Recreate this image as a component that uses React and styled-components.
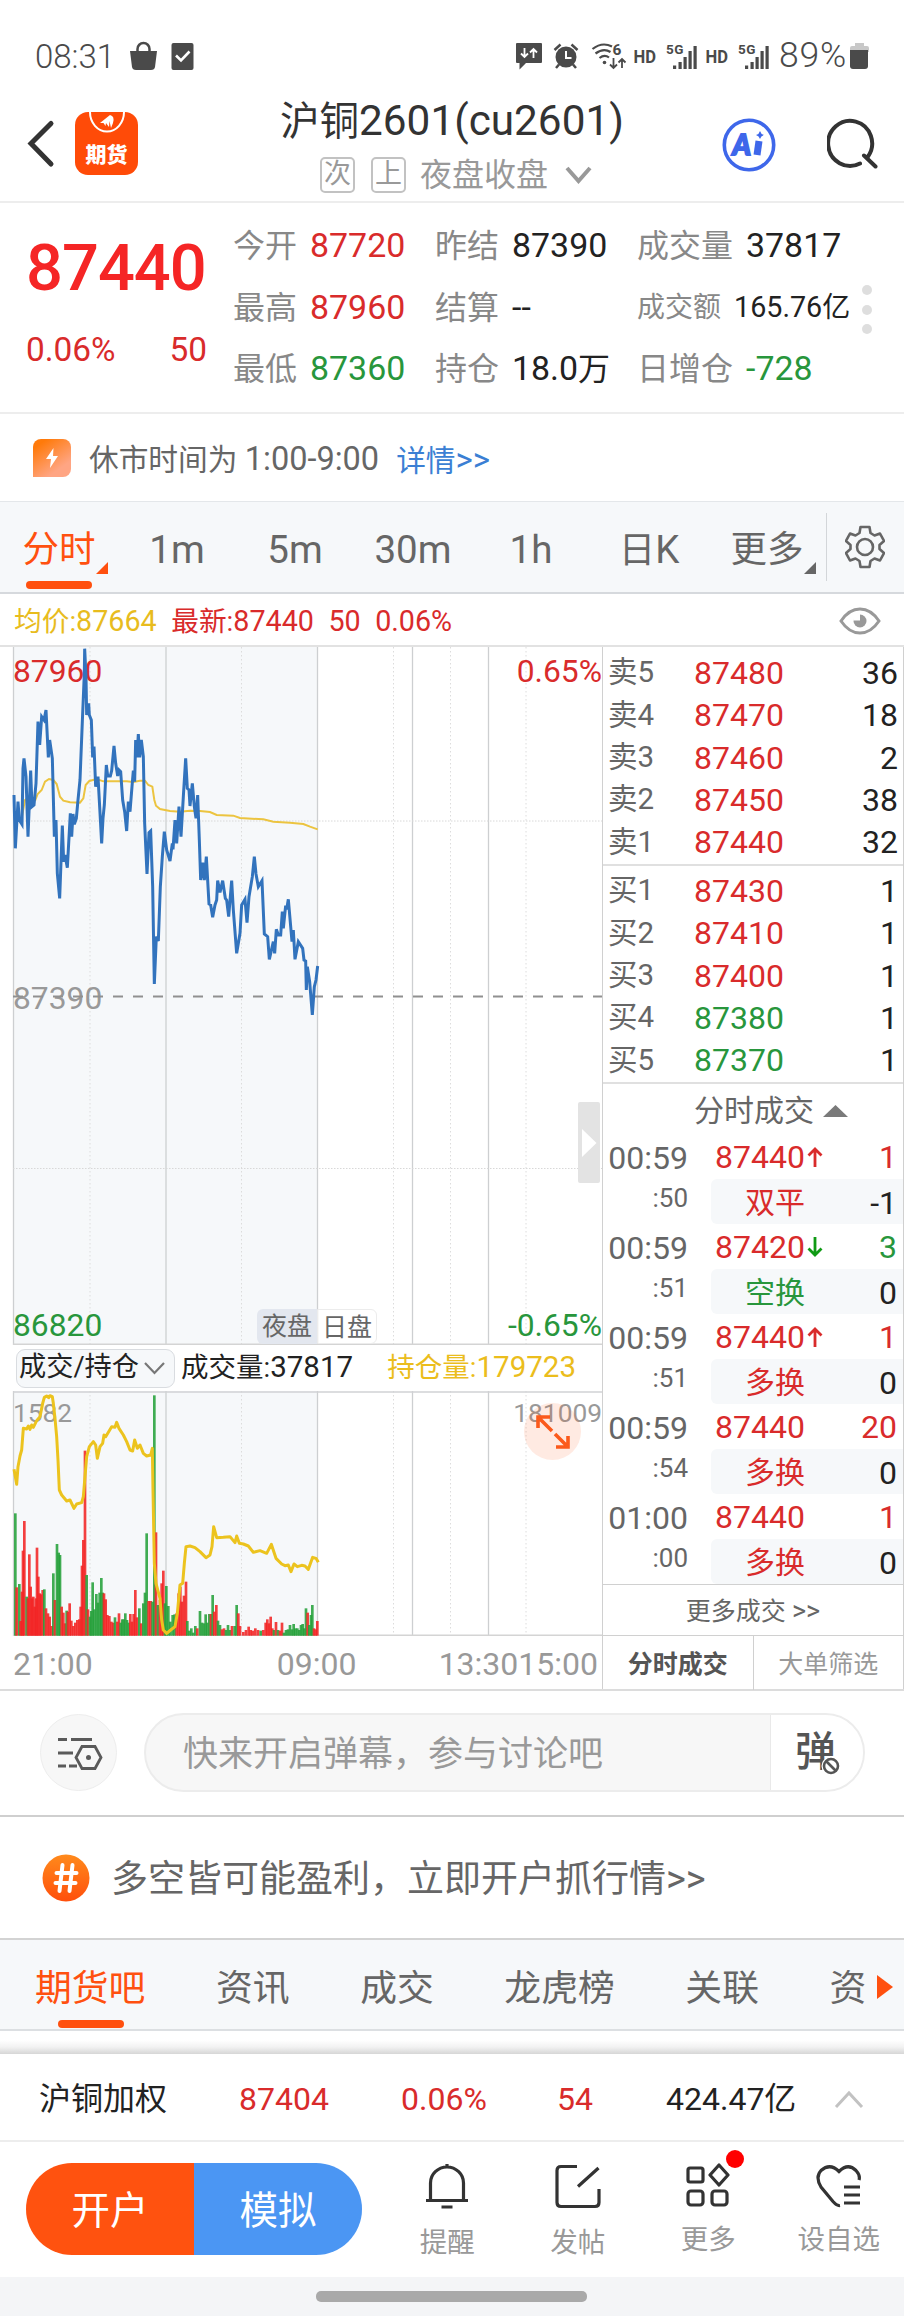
import React from 'react';

import styled, { createGlobalStyle, css } from 'styled-components';

const RED = '#d92b2b';
const GREEN = '#28963c';
const ORANGE = '#ff500f';
const LINE = '#d0d0d0';
const TINT = '#f6f8fa';

const GlobalStyle = createGlobalStyle`
  * {
    box-sizing: border-box;
  }
  body {
    margin: 0;
    background: #fff;
    font-family: Roboto, "Noto Sans CJK SC", sans-serif;
    color: #222;
  }
  svg {
    display: block;
    flex-shrink: 0;
  }
`;

const Page = styled.div`
  width: 904px;
  height: 2316px;
  overflow: hidden;
  display: flex;
  flex-direction: column;
  white-space: nowrap;
  line-height: 1;
  > * {
    flex-shrink: 0;
  }
`;

// latin glyphs run a little larger than the chinese ones
const Num = styled.span`
  font-size: ${(p) => p.$size || 32}px;
  color: ${(p) => p.$color || 'inherit'};
`;

/* status bar */

const StatusBar = styled.div`
  height: 92px;
  padding: 20px 35px 0 35px;
  display: flex;
  align-items: center;
  color: #4a4a4a;
`;

const Clock = styled.span`
  width: 94px;
  font-size: 33px;
  font-weight: 300;
`;

const StatusRight = styled.div`
  margin-left: auto;
  display: flex;
  align-items: center;
  gap: 0;
`;

const Percent = styled.span`
  font-size: 35.5px;
  font-weight: 300;
  margin: 0 3px 0 1px;
  letter-spacing: 0.8px;
`;

/* header */

const Header = styled.header`
  height: 111px;
  border-bottom: 2px solid #ededed;
  display: grid;
  grid-template-columns: 281px 342px 281px;
`;

const HeaderLeft = styled.div`
  display: flex;
  align-items: flex-start;
  padding: 20px 0 0 27px;
  gap: 20px;
`;

const Logo = styled.div`
  width: 63px;
  height: 63px;
  border-radius: 13px;
  background: #ff4b08;
  color: #fff;
  font-size: 21px;
  font-weight: 900;
  display: flex;
  flex-direction: column;
  align-items: center;
  line-height: 38px;
`;

const HeaderCenter = styled.div`
  display: flex;
  flex-direction: column;
  align-items: center;
`;

const Title = styled.h1`
  margin: 7px 0 0;
  height: 44px;
  font-size: 39.5px;
  line-height: 44px;
  font-weight: 400;
  color: #333;
`;

const SubTitle = styled.div`
  height: 36px;
  margin-top: 14px;
  padding-left: 8px;
  display: flex;
  align-items: center;
  font-size: 32px;
  color: #999;
  span {
    margin: 0 17px 0 14px;
  }
`;

const Tag = styled.i`
  width: 35px;
  height: 36px;
  border: 2px solid #c2c2c2;
  border-radius: 5px;
  margin-right: ${(p) => (p.$last ? 0 : 16)}px;
  font-style: normal;
  font-size: 27px;
  line-height: 31px;
  text-align: center;
`;

const HeaderRight = styled.div`
  display: flex;
  align-items: flex-start;
  padding: 26px 0 0 99px;
  gap: 51px;
`;

/* quote */

const Quote = styled.section`
  height: 211px;
  border-bottom: 2px solid #ededed;
  display: flex;
  padding: 12px 0 0 26px;
`;

const Last = styled.div`
  width: 207px;
  color: #f52525;
  strong {
    display: block;
    margin-top: 17px;
    height: 72px;
    line-height: 72px;
    font-size: 65px;
    font-weight: 500;
    letter-spacing: -1px;
  }
`;

const Change = styled.div`
  width: 181px;
  margin-top: 17px;
  display: flex;
  justify-content: space-between;
  font-size: 33.4px;
  line-height: 58px;
  color: ${RED};
`;

const Stats = styled.div`
  display: grid;
  grid-template-columns: 202px 202px 225px;
  grid-auto-rows: 61.7px;
`;

const Stat = styled.div`
  display: flex;
  align-items: center;
  font-size: ${(p) => (p.$small ? 28 : 32)}px;
  color: ${(p) => p.$color || '#222'};
  label {
    color: #888;
    margin-right: 13px;
  }
`;

const Dots = styled.div`
  margin-top: 70px;
  display: flex;
  flex-direction: column;
  gap: 9.5px;
  i {
    width: 10px;
    height: 10px;
    border-radius: 50%;
    background: #dedede;
  }
`;

const Notice = styled.div`
  height: 87px;
  padding: 4px 33px 0;
  display: flex;
  align-items: center;
  font-size: 29.7px;
  color: #666;
  a {
    margin-left: 17px;
    color: #3b7fd4;
  }
`;

const NoticeIcon = styled.span`
  width: 38px;
  height: 38px;
  margin: -4px 18px 0 0;
  border-radius: 8px 8px 8px 0;
  background: linear-gradient(145deg, #ff7a0a 15%, #ffa583 75%);
  display: flex;
  align-items: center;
  justify-content: center;
`;

/* period tabs */

const PeriodBar = styled.nav`
  height: 93px;
  background: ${TINT};
  border-top: 1px solid #e4e7ea;
  border-bottom: 2px solid #d6d9dd;
  display: flex;
`;

const Period = styled.div`
  position: relative;
  width: 118px;
  text-align: center;
  font-size: 36.5px;
  line-height: 95px;
  color: ${(p) => (p.$active ? ORANGE : '#666')};
  ${(p) => p.$active && css`
    &::before {
      content: '';
      position: absolute;
      left: 26px;
      bottom: 3px;
      width: 66px;
      height: 8px;
      border-radius: 4px;
      background: ${ORANGE};
    }
  `}
  ${(p) => p.$corner && css`
    &::after {
      content: '';
      position: absolute;
      right: 10px;
      top: 60px;
      border-left: 12px solid transparent;
      border-bottom: 12px solid ${p.$active ? ORANGE : '#666'};
    }
  `}
`;

const GearCell = styled.div`
  margin: 11px 0;
  padding: 0 0 0 18px;
  flex: 1;
  border-left: 1px solid #d3d6d9;
  display: flex;
  align-items: center;
`;

const InfoBar = styled.div`
  height: 51px;
  padding: 3px 23px 0 14px;
  display: flex;
  align-items: center;
  gap: 14.5px;
  font-size: 27.7px;
  color: ${RED};
  svg {
    margin-left: auto;
  }
`;

/* chart + order book */

const Main = styled.div`
  height: 1046px;
  display: flex;
  border-top: 2px solid #e2e2e2;
  border-bottom: 2px solid #dcdcdc;
`;

const ChartPane = styled.div`
  position: relative;
  width: 602px;
`;

const SessionTabs = styled.div`
  position: absolute;
  left: 257px;
  top: 662px;
  display: flex;
  span {
    width: 60px;
    height: 35px;
    font-size: 25px;
    line-height: 36px;
    text-align: center;
    color: #666;
    border: 1px solid #ececec;
    border-radius: 0 6px 6px 0;
  }
  span:first-child {
    border: none;
    border-radius: 6px 0 0 6px;
    background: #e3e7ef;
  }
`;

const Collapse = styled.div`
  position: absolute;
  right: 2px;
  top: 455px;
  width: 22px;
  height: 81px;
  border-radius: 2px;
  background: #e3e3e3;
  display: flex;
  align-items: center;
  justify-content: center;
`;

const Expand = styled.div`
  position: absolute;
  right: 21px;
  top: 756px;
  width: 57px;
  height: 57px;
  border-radius: 50%;
  background: rgba(255, 80, 15, 0.12);
  display: flex;
  align-items: center;
  justify-content: center;
`;

const VolumeBar = styled.div`
  height: 46px;
  padding-left: 16px;
  display: flex;
  align-items: center;
  font-size: 27.5px;
  color: #222;
`;

const Indicator = styled.div`
  width: 159px;
  height: 39px;
  margin-right: 6px;
  padding-left: 2px;
  border: 1px solid #d9dce0;
  border-radius: 9px;
  background: ${TINT};
  display: flex;
  align-items: center;
  gap: 4px;
  font-size: 27.2px;
`;

const OpenInterest = styled.span`
  margin-left: auto;
  margin-right: 26px;
  color: #ebbd1c;
`;

const TimeAxis = styled.div`
  height: 54px;
  padding: 2px 4px 0 13px;
  display: flex;
  align-items: center;
  font-size: 32px;
  color: #999;
  span:nth-child(2) {
    margin-left: 184px;
    margin-right: auto;
  }
`;

const BookPane = styled.div`
  width: 302px;
  border-left: 1px solid ${LINE};
  border-right: 1px solid ${LINE};
`;

const Levels = styled.div`
  height: ${(p) => p.$height}px;
  padding: ${(p) => p.$top}px 5px 0 5px;
  border-bottom: 2px solid #e0e0e0;
`;

const Level = styled.div`
  height: 42.3px;
  display: grid;
  grid-template-columns: 86px 1fr auto;
  align-items: center;
  font-size: 32px;
  span:first-child {
    font-size: 29.5px;
    color: #666;
  }
`;

const TradesTitle = styled.div`
  height: 50px;
  padding: 3px 0 0 91px;
  display: flex;
  align-items: center;
  gap: 9px;
  font-size: 30px;
  color: #666;
`;

const Trade = styled.div`
  height: 90.1px;
  display: grid;
  grid-template-columns: 108px 1fr;
  grid-template-rows: 45px 45px;
  font-size: 32px;
  line-height: 48px;
  color: #666;
`;

const TradeTime = styled.span`
  width: 85px;
  text-align: right;
`;

const Seconds = styled(TradeTime)`
  font-size: 26px;
  line-height: 38px;
`;

const TradePrice = styled.div`
  display: flex;
  align-items: center;
  padding: 0 6px 0 4px;
  color: ${RED};
  svg {
    margin-left: 2px;
  }
  span:last-child {
    margin-left: auto;
    color: ${(p) => p.$color};
  }
`;

const TradeKind = styled.div`
  display: flex;
  justify-content: space-between;
  padding: 0 6px 0 34px;
  border-radius: 6px 0 0 6px;
  background: ${TINT};
  font-size: 30px;
  color: ${(p) => p.$color};
`;

const MoreTrades = styled.div`
  height: 52px;
  border-top: 1px solid ${LINE};
  border-bottom: 1px solid ${LINE};
  text-align: center;
  font-size: 25px;
  line-height: 52px;
  color: #666;
`;

const TradeTabs = styled.div`
  display: flex;
  height: 54px;
  span {
    flex: 1;
    text-align: center;
    font-size: 25px;
    line-height: 58px;
    color: #999;
  }
  span:first-child {
    border-right: 1px solid ${LINE};
    color: #555;
    font-weight: 700;
  }
`;

/* comments and promo */

const CommentBar = styled.div`
  height: 126px;
  border-bottom: 2px solid #cfcfcf;
  padding: 0 39px 1px 40px;
  display: flex;
  align-items: center;
`;

const RoundButton = styled.div`
  width: 77px;
  height: 77px;
  margin-right: 27px;
  padding-left: 2px;
  border: 1px solid #ededed;
  border-radius: 50%;
  background: #f7f7f7;
  display: flex;
  align-items: center;
  justify-content: center;
`;

const CommentInput = styled.div`
  flex: 1;
  height: 79px;
  border: 2px solid #ececec;
  border-radius: 40px;
  background: #f7f7f7;
  overflow: hidden;
  display: flex;
  justify-content: space-between;
  padding-left: 37px;
  font-size: 35px;
  line-height: 79px;
  color: #999;
`;

const DanmuToggle = styled.div`
  position: relative;
  width: 93px;
  padding-left: 24px;
  border-left: 1px solid #e9e9e9;
  background: #fff;
  font-size: 41px;
  font-weight: 500;
  line-height: 75px;
  color: #555;
  svg {
    position: absolute;
    left: 50px;
    top: 41px;
  }
`;

const Promo = styled.div`
  height: 121px;
  padding-left: 42px;
  display: flex;
  align-items: center;
  font-size: 37px;
  color: #666;
  p {
    margin: 2px 0 0 21px;
  }
`;

const BoardTabs = styled.nav`
  height: 93px;
  background: ${TINT};
  border-top: 2px solid #d3d3d3;
  border-bottom: 2px solid #dcdfe2;
  padding-left: 35px;
  display: flex;
  gap: 70.6px;
  font-size: 36.8px;
  line-height: 98px;
  color: #666;
`;

const BoardTab = styled.span`
  position: relative;
  ${(p) => p.$active && css`
    color: ${ORANGE};
    &::after {
      content: '';
      position: absolute;
      left: 23px;
      bottom: 1px;
      width: 66px;
      height: 8px;
      border-radius: 4px;
      background: ${ORANGE};
    }
  `}
`;

const BoardArrow = styled.i`
  width: 0;
  align-self: center;
  margin-left: -60px;
  margin-top: 4px;
  border: 12px solid transparent;
  border-left: 16px solid ${ORANGE};
  border-right: none;
`;

const Shade = styled.div`
  height: 23px;
  background: linear-gradient(#fff 40%, #f2f2f2 70%, #d6d6d6);
`;

const IndexRow = styled.div`
  height: 88px;
  border-bottom: 2px solid #ededed;
  display: grid;
  grid-template-columns: 200px 162px 156px 109px 168px 28px;
  align-items: center;
  padding: 4px 0 0 39px;
  font-size: 32px;
  color: ${RED};
  span:nth-child(1),
  span:nth-child(5) {
    color: #222;
  }
`;

const Actions = styled.div`
  height: 135px;
  padding-left: 26px;
  display: flex;
`;

const Pill = styled.div`
  width: 336px;
  height: 92px;
  margin-top: 21px;
  border-radius: 46px;
  overflow: hidden;
  display: flex;
  font-size: 38.5px;
  line-height: 96px;
  color: #fff;
  text-align: center;
`;

const PillHalf = styled.span`
  flex: 1;
  background: ${(p) => p.$color};
`;

const Action = styled.div`
  position: relative;
  width: 130.5px;
  margin-left: ${(p) => (p.$first ? 20 : 0)}px;
  padding-top: 21px;
  display: flex;
  flex-direction: column;
  align-items: center;
  font-size: 27.5px;
  color: #999;
  span {
    margin-top: ${(p) => (p.$tight ? 17 : 20)}px;
  }
`;

const RedDot = styled.i`
  position: absolute;
  left: 83px;
  top: 8px;
  width: 18px;
  height: 18px;
  border-radius: 50%;
  background: #ff0000;
`;

const HomeArea = styled.div`
  height: 39px;
  padding-top: 14px;
  background: #f4f5f7;
  &::before {
    content: '';
    display: block;
    width: 271px;
    height: 11px;
    margin-left: 316px;
    border-radius: 5px;
    background: #a9a9a9;
  }
`;

// chart series, three units per pixel
const PRICE = '42,465 46,625 54,485 58,540 66,553 69,385 72,355 78,410 84,590 92,392 96,500 102,495 108,430 114,245 119,315 125,230 132,240 138,210 145,352 149,300 157,355 163,590 168,540 172,700 179,775 187,557 191,665 195,645 202,683 211,520 215,590 219,522 223,553 229,535 234,480 240,420 247,245 253,100 254,26 258,110 260,225 266,190 268,225 274,240 278,352 282,320 287,440 294,410 299,500 305,610 309,535 313,495 319,375 323,408 331,408 335,392 342,318 347,370 353,408 357,390 362,395 368,480 374,515 380,573 385,485 390,515 396,440 400,392 404,425 407,300 411,352 415,282 419,352 424,300 430,350 434,550 441,702 447,578 452,573 458,740 463,1032 469,890 475,903 481,740 487,650 493,575 500,630 510,663 517,610 519,628 525,540 530,610 537,500 543,590 550,470 557,355 562,445 567,450 570,498 577,430 583,500 588,535 593,465 598,600 602,720 608,668 613,720 619,650 627,792 632,795 638,832 645,795 650,780 653,722 660,757 668,722 676,775 680,780 686,830 695,722 700,810 710,940 720,880 725,795 735,778 741,848 747,770 757,710 763,650 768,702 775,740 786,722 793,882 803,890 808,958 820,905 824,940 829,868 835,885 842,885 847,815 850,865 857,797 860,808 865,778 876,905 880,870 885,958 895,905 908,925 912,960 917,963 919,1050 922,980 929,1025 937,1125 943,1040 948,1020 953,978';
const AVERAGE = '62,550 75,480 84,474 106,480 113,462 125,450 135,425 147,417 160,420 170,432 180,470 190,482 210,487 240,488 250,475 257,435 268,423 290,417 310,424 380,424 400,426 420,422 435,422 445,435 457,440 463,480 468,497 480,507 510,513 540,515 570,512 600,513 630,516 650,525 700,527 720,534 790,538 820,545 870,548 910,552 930,560 953,568';
const INTEREST = '42,508 50,553 54,500 60,468 65,450 70,385 80,387 85,378 90,388 95,375 100,382 110,362 120,350 128,310 133,292 140,288 146,293 150,287 157,290 160,310 165,355 170,410 174,480 178,570 185,585 200,603 210,600 222,625 230,612 245,608 250,590 255,530 260,470 268,440 280,425 287,435 292,475 300,440 308,430 312,405 317,410 335,380 345,382 350,367 357,385 370,405 380,425 390,450 398,453 404,420 412,445 420,435 430,460 440,468 452,465 457,445 459,570 463,790 468,850 480,895 485,960 490,990 500,1000 512,990 525,980 532,940 540,855 548,850 553,790 558,740 570,738 585,743 600,755 618,773 630,765 636,740 641,680 650,713 670,712 690,710 705,728 710,708 718,730 730,732 745,738 760,757 780,752 800,760 814,733 828,775 845,792 855,797 865,795 873,815 882,792 892,800 905,796 915,798 925,808 938,772 948,775 955,787';
const VOLUME = '46g640 50r862 58g852 62r963 66r875 69r752 73r663 80g890 84r895 88r763 92r860 96r895 100r890 104r920 108r895 111r743 115r830 119r880 123r883 128r870 133g868 138r925 144r940 149r950 155r978 160g820 165r900 171g732 176g758 180g765 185r920 190r938 195r970 200g932 204r935 209r910 214r962 220r978 226r968 232r960 238r958 242r920 246r797 250r720 255r452 260g825 264r928 270g950 274g933 278g847 283g928 289g882 294g908 299g878 304g834 308g878 312r880 317r898 322r945 328r948 334r965 340r968 345g952 352r965 357r940 362g968 367g958 371g958 376g940 381g960 386g968 391r942 396r965 401r942 406r870 411r952 418g925 424r970 430g910 435g878 440g700 446r903 452r903 458g905 463g286 468r697 474g915 480r900 485r850 490r812 495g910 499g858 505g918 511g965 518g945 524g943 530r940 536r880 541r860 546r905 552r887 558r845 562g963 568g992 574g985 580g998 586g978 592r985 600g933 606g968 612g970 617g943 622g968 628g942 633r942 638g885 643r935 649r915 654g962 660g975 666r988 672r985 678g990 684g975 690g990 696r978 704g978 710g915 715r940 720r978 730r996 738r990 746r980 752r990 758r992 766r985 774r990 782g992 790r990 797r968 802r958 807r970 812r950 817r985 822g990 828r966 834g990 840r992 846r968 852g998 858g990 864g988 870g975 876g988 881g972 886g985 892g985 898g990 903g975 908g972 913g985 918g925 923r938 928g975 933g945 937g915 942r985 947r988 952r963'
  .split(' ')
  .map((s) => ({ x: parseInt(s, 10), up: s.includes('r'), top: Number(s.split(/[rg]/)[1]) }));

const SOLID = [13.5, 166, 317.5, 412.5, 488.5];
const DOTTED = [90, 241.5, 393.5, 450.5, 526];

const Grid = ({ top, bottom }) => (
  <>
    <rect x="13" y={top} width="304.5" height={bottom - top} fill={TINT} />
    {DOTTED.map((x) => (
      <path key={x} d={`M${x} ${top}V${bottom}`} stroke="#dcdcdc" strokeDasharray="1.5 2.5" />
    ))}
    {SOLID.map((x) => (
      <path key={x} d={`M${x} ${top}V${bottom}`} stroke="#cdcfd1" strokeWidth="1.3" />
    ))}
    <path d={`M13 ${bottom - 0.7}H602`} stroke="#d4d4d4" strokeWidth="1.4" />
  </>
);

const PriceChart = () => (
  <svg width="602" height="698" viewBox="0 647 602 698" fill="none" fontSize="31.8">
    <Grid top={647} bottom={1345} />
    <path d="M13 821H602M13 1168.5H602" stroke="#d8d8d8" strokeDasharray="1.5 1.5" />
    <text x="13" y="681.5" fill={RED}>87960</text>
    <text x="602" y="681.5" fill={RED} textAnchor="end">0.65%</text>
    <text x="13" y="1008.5" fill="#999">87390</text>
    <path d="M13 996.5H602" stroke="#909090" strokeWidth="1.8" strokeDasharray="10 10" />
    <text x="13" y="1336" fill={GREEN}>86820</text>
    <text x="602" y="1336" fill={GREEN} textAnchor="end">-0.65%</text>
    <g transform="translate(0 640) scale(.33333)">
      <polyline points={AVERAGE} stroke="#ecc440" strokeWidth="6" />
      <polyline points={PRICE} stroke="#3273bd" strokeWidth="9" />
    </g>
  </svg>
);

const VolumeChart = () => (
  <svg width="602" height="245" viewBox="0 1391 602 245" fill="none" fontSize="26.3">
    <Grid top={1391} bottom={1636} />
    <path d="M13 1392H602" stroke="#d0d2d4" strokeWidth="1.4" />
    <g transform="translate(0 1300) scale(.33333)">
      {VOLUME.map((b) => (
        <rect key={b.x} x={b.x - 4} y={b.top} width="8" height={1007 - b.top} fill={b.up ? '#f32424' : '#26a03a'} fillOpacity=".88" />
      ))}
    </g>
    <text x="13" y="1422" fill="#999">1582</text>
    <text x="602" y="1422" fill="#999" textAnchor="end">181009</text>
    <g transform="translate(0 1300) scale(.33333)">
      <polyline points={INTEREST} stroke="#ecc31e" strokeWidth="9" strokeLinejoin="round" />
    </g>
  </svg>
);

/* icons */

const Chevron = ({ w, h, color, stroke, up }) => (
  <svg width={w} height={h} viewBox={`0 0 ${w} ${h}`} fill="none">
    <path d={up ? `M2 ${h - 2}L${w / 2} 3L${w - 2} ${h - 2}` : `M2 2L${w / 2} ${h - 3}L${w - 2} 2`} stroke={color} strokeWidth={stroke} />
  </svg>
);

const LeftIcons = () => (
  <svg width="66" height="30" viewBox="129 40 66 30" fill="none">
    <path d="M130 50h27l-2 16q-.5 3-4 3h-15q-3.500 0-4-3z" fill="#4a4a4a" />
    <path d="M137.500 52v-4a6 6 0 0 1 12 0v4" stroke="#4a4a4a" strokeWidth="2.500" />
    <rect x="171.500" y="42" width="22" height="27" rx="2" fill="#4a4a4a" />
    <path d="M176 54.500l5 5 8.500-9" stroke="#fff" strokeWidth="2.600" />
  </svg>
);

const RightIcons = () => (
  <svg width="119" height="30" viewBox="512 40 119 30" fill="none" stroke="#4a4a4a">
    <path d="M514 42h24q1 0 1 1v18q0 1-1 1h-15l-6.500 6.500v-6.500h-2.500q-1 0-1-1v-18q0-1 1-1z" fill="#4a4a4a" stroke="none" />
    <path d="M521.500 47v9m-3.500-3.500l3.500 3.500 3.500-3.500M530.500 57v-9m-3.500 3.500l3.500-3.500 3.500 3.500" stroke="#fff" strokeWidth="1.800" />
    <circle cx="563" cy="56" r="10.500" fill="#4a4a4a" stroke="none" />
    <path d="M551.500 49l6-5.500M574.500 49l-6-5.500M556 63.500l-3 3.500M570 63.500l3 3.500" strokeWidth="2.500" />
    <path d="M563 50v7h5.500" stroke="#fff" strokeWidth="2" />
    <path d="M589.500 48q9.500-7.500 19.500-2.500M592.500 52.500q8-6 15-1.500M596.500 57q5-4 9.500-.5" strokeWidth="2.200" />
    <circle cx="601.500" cy="61.500" r="1.800" fill="#4a4a4a" stroke="none" />
    <path d="M610.500 57v10m-3.500-3.500l3.500 3.500 3.500-3.500M619 67v-9m-3.500 3.500l3.500-3.500 3.500 3.500" strokeWidth="1.800" />
    <text x="609.500" y="54" fontSize="15.500" fontWeight="700" fill="#4a4a4a" stroke="none">6</text>
  </svg>
);

const Signal = () => (
  <svg width="72" height="30" viewBox="631 40 72 30" fill="#4a4a4a">
    <text x="630.500" y="61.500" fontSize="17.500" fontWeight="700" textLength="22.500" lengthAdjust="spacingAndGlyphs">HD</text>
    <text x="663" y="52.500" fontSize="13.500" fontWeight="700" textLength="17.500">5G</text>
    <path d="M670 64.500h3.200v3.500h-3.200zM675.500 61h3.200v7h-3.200zM680.500 56h3.200v12h-3.200zM685.500 50h3.200v18h-3.200zM690.500 45h3.200v23h-3.200z" />
  </svg>
);

const Battery = () => (
  <svg width="19" height="28" viewBox="0 0 19 28">
    <path d="M5 1h9v3h3q2 0 2 2v4H0V6q0-2 2-2h3z" fill="#c8c8c8" />
    <path d="M0 8h18v16q0 3-3 3H3q-3 0-3-3z" fill="#4a4a4a" />
  </svg>
);

const AiIcon = () => (
  <svg width="54" height="54" viewBox="0 0 54 54" fill="none">
    <circle cx="27" cy="27" r="24.700" stroke="#3e67ea" strokeWidth="3.600" />
    <text x="10.500" y="37" fontFamily="Lato" fontSize="28" fontWeight="900" fontStyle="italic" fill="#3e67ea" stroke="#3e67ea" strokeWidth="1.800">A</text>
    <path d="M37 23l-2 14" stroke="#3e67ea" strokeWidth="7" />
    <path d="M38 13q.8 3.200 4 4-3.200.8-4 4-.8-3.200-4-4 3.200-.8 4-4z" fill="#3e67ea" />
  </svg>
);

const SearchIcon = () => (
  <svg width="52" height="52" viewBox="0 0 52 52" fill="none" stroke="#333" strokeWidth="4" strokeLinecap="round">
    <path d="M33 45.500A22 22.500 0 1 1 41 38.500M37 37.500L48.500 48.500" />
  </svg>
);

const LogoMark = () => (
  <svg width="40" height="24" viewBox="0 0 40 24" fill="none">
    <path d="M3 0a17 19.500 0 0 0 34 0" stroke="#fff" strokeWidth="2" />
    <path d="M13 11l10-8q5 1 3 8l-2 5-1.500-7-.500 6-3-4-.500 3-2-3z" fill="#fff" />
  </svg>
);

const GearIcon = () => (
  <svg width="40" height="44" viewBox="0 0 40 44" fill="none" stroke="#666" strokeWidth="2.600" strokeLinejoin="round">
    <path d="M15.500 2h9l1 6 4 2.500 5.500-2 4 7.500-4.500 4v4l4.500 4-4 7.500-5.500-2-4 2.500-1 6h-9l-1-6-4-2.500-5.500 2-4-7.500 4.500-4v-4l-4.500-4 4-7.500 5.500 2 4-2.500z" />
    <circle cx="20" cy="22" r="8" />
  </svg>
);

const EyeIcon = () => (
  <svg width="42" height="28" viewBox="0 0 42 28" fill="none">
    <path d="M2 14Q10 2 21 2t19 12Q32 26 21 26T2 14z" stroke="#999" strokeWidth="3" />
    <circle cx="21" cy="14" r="6.500" fill="#999" />
    <path d="M21 6.500v7h-7q0-6 7-7z" fill="#fff" />
  </svg>
);

const Arrow = ({ down }) => (
  <svg width="16" height="22" viewBox="0 0 16 22" fill="none" stroke={down ? '#0f9a14' : RED} strokeWidth="2.800">
    <path d={down ? 'M8 1v18M1.500 12.500L8 19l6.500-6.500' : 'M8 21V3M1.500 9.500L8 3l6.500 6.500'} />
  </svg>
);

const QUOTE = [
  ['今开', '87720', RED], ['昨结', '87390'], ['成交量', '37817'],
  ['最高', '87960', RED], ['结算', '--'], ['成交额', '165.76', null, '亿'],
  ['最低', '87360', GREEN], ['持仓', '18.0', null, '万'], ['日增仓', '-728', GREEN],
];

const ASKS = [['5', 87480, 36], ['4', 87470, 18], ['3', 87460, 2], ['2', 87450, 38], ['1', 87440, 32]];
const BIDS = [['1', 87430, 1], ['2', 87410, 1], ['3', 87400, 1], ['4', 87380, 1], ['5', 87370, 1]];

const TRADES = [
  { time: '00:59', sec: ':50', price: 87440, dir: 'up', qty: 1, color: RED, kind: '双平', diff: '-1' },
  { time: '00:59', sec: ':51', price: 87420, dir: 'down', qty: 3, color: GREEN, kind: '空换', diff: '0' },
  { time: '00:59', sec: ':51', price: 87440, dir: 'up', qty: 1, color: RED, kind: '多换', diff: '0' },
  { time: '00:59', sec: ':54', price: 87440, qty: 20, color: RED, kind: '多换', diff: '0' },
  { time: '01:00', sec: ':00', price: 87440, qty: 1, color: RED, kind: '多换', diff: '0' },
];

const renderLevels = (side, rows) => rows.map(([n, price, qty]) => (
  <Level key={n}>
    <span>{side}<Num>{n}</Num></span>
    <Num $color={price > 87390 ? RED : GREEN}>{price}</Num>
    <Num>{qty}</Num>
  </Level>
));

export default function App() {
  return (
    <Page>
      <GlobalStyle />
      <StatusBar>
        <Clock>08:31</Clock>
        <LeftIcons />
        <StatusRight>
          <RightIcons />
          <Signal />
          <Signal />
          <Percent>89%</Percent>
          <Battery />
        </StatusRight>
      </StatusBar>

      <Header>
        <HeaderLeft>
          <svg width="28" height="64" viewBox="0 0 28 64" fill="none">
            <path d="M24 11.500L4 31.500l20 20.500" stroke="#333" strokeWidth="5" strokeLinecap="round" />
          </svg>
          <Logo>
            <LogoMark />
            期货
          </Logo>
        </HeaderLeft>
        <HeaderCenter>
          <Title>沪铜<Num $size={42.3}>2601(cu2601)</Num></Title>
          <SubTitle>
            <Tag>次</Tag>
            <Tag $last>上</Tag>
            <span>夜盘收盘</span>
            <Chevron w={27} h={18} color="#999" stroke={4} />
          </SubTitle>
        </HeaderCenter>
        <HeaderRight>
          <AiIcon />
          <SearchIcon />
        </HeaderRight>
      </Header>

      <Quote>
        <Last>
          <strong>87440</strong>
          <Change>
            <span>0.06%</span>
            <span>50</span>
          </Change>
        </Last>
        <Stats>
          {QUOTE.map(([label, value, color, unit]) => {
            const small = label === '成交额';
            return (
              <Stat key={label} $color={color} $small={small}>
                <label>{label}</label>
                <Num $size={small ? 28.7 : 33.9}>{value}</Num>
                {unit}
              </Stat>
            );
          })}
        </Stats>
        <Dots>
          <i />
          <i />
          <i />
        </Dots>
      </Quote>

      <Notice>
        <NoticeIcon>
          <svg width="16" height="22" viewBox="0 0 16 22">
            <path d="M9.500 1L2 12h5l-1 9 8-12H9z" fill="#fff" />
          </svg>
        </NoticeIcon>
        <span>休市时间为 <Num $size={32.5}>1:00-9:00</Num></span>
        <a>详情<Num $size={33}>&gt;&gt;</Num></a>
      </Notice>

      <PeriodBar>
        <Period $active $corner>分时</Period>
        <Period><Num $size={38.5}>1m</Num></Period>
        <Period><Num $size={38.5}>5m</Num></Period>
        <Period><Num $size={38.5}>30m</Num></Period>
        <Period><Num $size={38.5}>1h</Num></Period>
        <Period>日<Num $size={38.5}>K</Num></Period>
        <Period $corner>更多</Period>
        <GearCell>
          <GearIcon />
        </GearCell>
      </PeriodBar>

      <InfoBar>
        <Num $size={27.7} $color="#e8bc1e">均价:<Num $size={28.7}>87664</Num></Num>
        <span>最新:<Num $size={28.7}>87440</Num></span>
        <Num $size={28.7}>50</Num>
        <Num $size={28.7}>0.06%</Num>
        <EyeIcon />
      </InfoBar>

      <Main>
        <ChartPane>
          <PriceChart />
          <VolumeBar>
            <Indicator>
              成交/持仓
              <Chevron w={23} h={15} color="#777" stroke={2.2} />
            </Indicator>
            <span>成交量:<Num $size={29.5}>37817</Num></span>
            <OpenInterest>持仓量:<Num $size={29.5}>179723</Num></OpenInterest>
          </VolumeBar>
          <VolumeChart />
          <TimeAxis>
            <span>21:00</span>
            <span>09:00</span>
            <span>13:30</span>
            <span>15:00</span>
          </TimeAxis>
          <SessionTabs>
            <span>夜盘</span>
            <span>日盘</span>
          </SessionTabs>
          <Collapse>
            <svg width="16" height="28" viewBox="0 0 16 28">
              <path d="M1 0l14.500 14L1 28z" fill="#fff" />
            </svg>
          </Collapse>
          <Expand>
            <svg width="36" height="36" viewBox="0 0 36 36" fill="none" stroke="#fb5a1c" strokeWidth="3.600">
              <path d="M3 14V3h12M4 4l13 13M33 22v11H21M32 32L20 20" />
            </svg>
          </Expand>
        </ChartPane>
        <BookPane>
          <Levels $height={219} $top={5}>{renderLevels('卖', ASKS)}</Levels>
          <Levels $height={218} $top={4}>{renderLevels('买', BIDS)}</Levels>
          <TradesTitle>
            分时成交
            <svg width="25" height="12" viewBox="0 0 25 12">
              <path d="M12.500 0L25 12H0z" fill="#7a7a7a" />
            </svg>
          </TradesTitle>
          {TRADES.map((t, i) => (
            <Trade key={i}>
              <TradeTime>{t.time}</TradeTime>
              <TradePrice $color={t.color}>
                <span>{t.price}</span>
                {t.dir && <Arrow down={t.dir === 'down'} />}
                <span>{t.qty}</span>
              </TradePrice>
              <Seconds>{t.sec}</Seconds>
              <TradeKind $color={t.color}>
                {t.kind}
                <Num $color="#222">{t.diff}</Num>
              </TradeKind>
            </Trade>
          ))}
          <MoreTrades>更多成交 <Num $size={27}>&gt;&gt;</Num></MoreTrades>
          <TradeTabs>
            <span>分时成交</span>
            <span>大单筛选</span>
          </TradeTabs>
        </BookPane>
      </Main>

      <CommentBar>
        <RoundButton>
          <svg width="46" height="36" viewBox="0 0 46 36" fill="none" stroke="#5a5a5a" strokeWidth="2.800">
            <path d="M1 4.500h9M14 4.500h21M1 18h15M1 31h8M12 31h8" />
            <path d="M25 11.500h13l6 11-6 11H25l-6-11z" />
            <circle cx="31.500" cy="22.500" r="2.500" fill="#5a5a5a" stroke="none" />
          </svg>
        </RoundButton>
        <CommentInput>
          快来开启弹幕，参与讨论吧
          <DanmuToggle>
            弹
            <svg width="20" height="20" viewBox="0 0 20 20">
              <circle cx="10" cy="10" r="7" fill="#fff" stroke="#fff" strokeWidth="5" />
              <circle cx="10" cy="10" r="7" fill="none" stroke="#555" strokeWidth="2.600" />
              <path d="M5 5l10 10" stroke="#555" strokeWidth="2.600" />
            </svg>
          </DanmuToggle>
        </CommentInput>
      </CommentBar>

      <Promo>
        <svg width="48" height="48" viewBox="0 0 48 48" fill="none">
          <defs>
            <linearGradient id="hash" x1="0" y1="0" x2="0" y2="1">
              <stop offset="0" stopColor="#ff8a1c" />
              <stop offset="1" stopColor="#ff4f0c" />
            </linearGradient>
          </defs>
          <circle cx="24" cy="24" r="23.500" fill="url(#hash)" />
          <path d="M20.500 11L17.500 37M30.500 11L27.500 37M14.500 19h20M13.500 29h20" stroke="#fff" strokeWidth="4" strokeLinecap="round" />
        </svg>
        <p>多空皆可能盈利，立即开户抓行情<Num $size={38}>&gt;&gt;</Num></p>
      </Promo>

      <BoardTabs>
        <BoardTab $active>期货吧</BoardTab>
        <BoardTab>资讯</BoardTab>
        <BoardTab>成交</BoardTab>
        <BoardTab>龙虎榜</BoardTab>
        <BoardTab>关联</BoardTab>
        <BoardTab>资</BoardTab>
        <BoardArrow />
      </BoardTabs>

      <Shade />
      <IndexRow>
        <span>沪铜加权</span>
        <span>87404</span>
        <span>0.06%</span>
        <span>54</span>
        <span>424.47亿</span>
        <Chevron w={30} h={19} color="#c2c2c2" stroke={3} up />
      </IndexRow>

      <Actions>
        <Pill>
          <PillHalf $color="#ff520f">开户</PillHalf>
          <PillHalf $color="#4b96f3">模拟</PillHalf>
        </Pill>
        <Action $first>
          <svg width="46" height="46" viewBox="0 0 46 46" fill="none" stroke="#333" strokeWidth="3.200">
            <path d="M2 37.500h42M6.500 37V20a16.500 16 0 0 1 33 0v17M23 4.500V1M17.500 44h11" />
          </svg>
          <span>提醒</span>
        </Action>
        <Action>
          <svg width="46" height="46" viewBox="0 0 46 46" fill="none" stroke="#333" strokeWidth="3.200">
            <path d="M22 3.500H6q-4 0-4 4v32q0 4 4 4h34q4 0 4-4V26M23 23.500L43.500 5" />
          </svg>
          <span>发帖</span>
        </Action>
        <Action $tight>
          <RedDot />
          <svg width="46" height="46" viewBox="0 0 46 46" fill="none" stroke="#333" strokeWidth="3.200">
            <rect x="3" y="5" width="15" height="14" rx="2" />
            <path d="M34 2l9 10-9 10-9-10z" strokeLinejoin="round" />
            <rect x="3" y="28" width="15" height="14" rx="3" />
            <rect x="27" y="28" width="15" height="14" rx="3" />
          </svg>
          <span>更多</span>
        </Action>
        <Action $tight>
          <svg width="46" height="46" viewBox="0 0 46 46" fill="none" stroke="#333" strokeWidth="3.200">
            <path d="M24 42.500Q21 43 17 38.500L5 24Q-1 14 5 7.500q9-8 18 1 9-9 17-1 4.500 5 3 9.500M28 24h16M28 32h16M28 40h16" />
          </svg>
          <span>设自选</span>
        </Action>
      </Actions>
      <HomeArea />
    </Page>
  );
}
